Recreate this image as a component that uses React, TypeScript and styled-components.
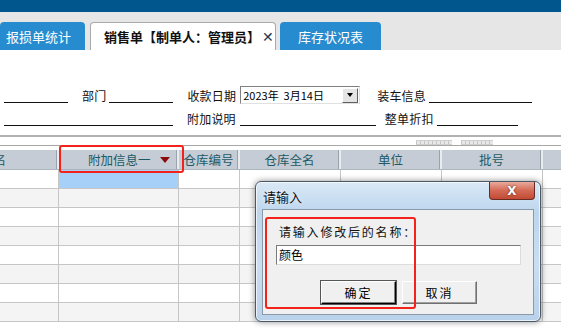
import React from 'react';
import styled, { createGlobalStyle } from 'styled-components';

const GlobalStyle = createGlobalStyle`
  html, body {
    margin: 0;
    padding: 0;
    width: 561px;
    height: 328px;
    overflow: hidden;
    background: #fff;
    font-family: "Noto Sans CJK SC", "Noto Sans", sans-serif;
  }
`;

const Page = styled.div`
  position: relative;
  width: 561px;
  height: 328px;
  overflow: hidden;
  display: flex;
  flex-direction: column;
`;

const TopBar = styled.div`
  height: 12px;
  background: #02568e;
  flex-shrink: 0;
`;

const TabStrip = styled.div`
  height: 38px;
  background: #e6e6e6;
  display: flex;
  align-items: flex-end;
  flex-shrink: 0;
`;

const Tab = styled.div<{ $w: number; $ml?: number; $pl?: number; $active?: boolean }>`
  width: ${(p) => p.$w}px;
  margin-left: ${(p) => p.$ml ?? 0}px;
  padding-left: ${(p) => p.$pl ?? 0}px;
  height: 28px;
  box-sizing: border-box;
  display: flex;
  align-items: center;
  justify-content: ${(p) => (p.$pl ? 'flex-start' : 'center')};
  border-radius: 4px 4px 0 0;
  font-size: 13px;
  white-space: nowrap;
  background: ${(p) => (p.$active ? '#fff' : '#268ccf')};
  color: ${(p) => (p.$active ? '#111' : '#fff')};
  border: ${(p) => (p.$active ? '1px solid #a9a9a9' : 'none')};
  border-bottom: none;
  font-weight: ${(p) => (p.$active ? 700 : 400)};
`;

const TabClose = styled.span`
  margin-left: 2px;
  font-size: 14px;
  font-weight: 700;
  color: #1e3a52;
  font-family: "DejaVu Sans", sans-serif;
`;

const Form = styled.div`
  height: 85px;
  box-sizing: border-box;
  padding-top: 36px;
  display: flex;
  flex-direction: column;
  gap: 5px;
  flex-shrink: 0;
`;

const FormRow = styled.div`
  display: flex;
  align-items: flex-end;
  height: 18px;
  padding-left: 4px;
`;

const Label = styled.span<{ $ml: number }>`
  margin-left: ${(p) => p.$ml}px;
  font-size: 12px;
  line-height: 16px;
  color: #111;
  letter-spacing: 0.2px;
  white-space: nowrap;
`;

const Blank = styled.span<{ $w: number; $ml?: number }>`
  width: ${(p) => p.$w}px;
  margin-left: ${(p) => p.$ml ?? 0}px;
  height: 0;
  border-bottom: 1px solid #111;
  margin-bottom: 1px;
`;

const DateBox = styled.div<{ $ml: number }>`
  margin-left: ${(p) => p.$ml}px;
  width: 120px;
  height: 18px;
  box-sizing: border-box;
  border: 1px solid;
  border-color: #808080 #e0e0e0 #e0e0e0 #808080;
  background: #fff;
  display: flex;
  align-items: center;
  justify-content: space-between;
  padding-left: 2px;
  font-size: 11px;
  color: #000;
  white-space: pre;
`;

const DropBtn = styled.div`
  width: 16px;
  height: 15px;
  margin-right: 1px;
  box-sizing: border-box;
  border: 1px solid;
  border-color: #fff #606060 #606060 #fff;
  background: #e4e4e4;
  display: flex;
  align-items: center;
  justify-content: center;
  &::after {
    content: '';
    border-left: 3.5px solid transparent;
    border-right: 3.5px solid transparent;
    border-top: 4px solid #000;
  }
`;

const Splitter = styled.div`
  height: 15px;
  flex-shrink: 0;
  box-sizing: border-box;
  border-top: 2px solid #b2b2b2;
  display: flex;
  flex-direction: column;
`;

const Grips = styled.div`
  height: 8px;
  display: flex;
  gap: 9px;
  padding-left: 416px;
  padding-top: 2px;
  box-sizing: border-box;
  align-items: center;
`;

const Grip = styled.span<{ $w: number }>`
  width: ${(p) => p.$w}px;
  height: 3px;
  background: repeating-linear-gradient(90deg, #c4c4c4 0 1px, #e8e8e8 1px 4px);
  border-top: 1px solid #cfcfcf;
  border-bottom: 1px solid #cfcfcf;
`;

const SplitLine = styled.div`
  border-top: 1px solid #a8a8a8;
`;

const Grid = styled.div`
  display: flex;
  flex-direction: column;
  margin-left: -41px;
`;

const Row = styled.div<{ $header?: boolean; $alt?: boolean }>`
  display: flex;
  height: ${(p) => (p.$header ? 20 : 19)}px;
  box-sizing: border-box;
  background: ${(p) => (p.$header ? '#c5ccd5' : p.$alt ? '#f4f4f4' : '#fff')};
  border-bottom: 1px solid ${(p) => (p.$header ? '#aeb5bd' : '#c6c6c6')};
`;

const Cell = styled.div<{ $w: number; $header?: boolean; $sel?: boolean; $pl?: number }>`
  position: relative;
  width: ${(p) => p.$w}px;
  flex-shrink: 0;
  box-sizing: border-box;
  padding-left: ${(p) => p.$pl ?? 0}px;
  border-right: ${(p) => (p.$header ? '2px solid #e9ecef' : '1px solid #c6c6c6')};
  box-shadow: ${(p) => (p.$header ? 'inset -1px 0 0 #9aa2ab' : 'none')};
  background: ${(p) => (p.$sel ? '#a6d0f8' : 'transparent')};
  display: flex;
  align-items: center;
  justify-content: ${(p) => (p.$pl !== undefined ? 'flex-start' : 'center')};
  font-size: 12.5px;
  color: #1c5a66;
  white-space: nowrap;
  overflow: hidden;
`;

const SortArrow = styled.span`
  position: absolute;
  right: 7px;
  top: 7px;
  border-left: 5px solid transparent;
  border-right: 5px solid transparent;
  border-top: 6px solid #8b0a0a;
`;

const Callout = styled.div`
  position: absolute;
  border: 2.5px solid #f3231b;
  border-radius: 3px;
  pointer-events: none;
`;

const Dialog = styled.div`
  position: absolute;
  left: 255px;
  top: 181px;
  width: 286px;
  height: 141px;
  box-sizing: border-box;
  border: 1px solid #4a5866;
  border-radius: 6px;
  background: linear-gradient(180deg, #d9e8f6 0%, #bdd6ee 22%, #c9def2 60%, #b9d1ea 100%);
  box-shadow: 0 0 6px rgba(0, 0, 0, 0.45), inset 0 0 0 1px rgba(255, 255, 255, 0.7);
  display: flex;
  flex-direction: column;
  padding: 0 6px 6px 6px;
`;

const TitleBar = styled.div`
  height: 27px;
  display: flex;
  align-items: flex-start;
  justify-content: space-between;
`;

const Title = styled.span`
  margin-top: 5px;
  margin-left: 1px;
  font-size: 13px;
  color: #111;
  text-shadow: 0 0 4px #fff;
`;

const CloseBtn = styled.div`
  width: 46px;
  height: 18px;
  margin-right: -1px;
  box-sizing: border-box;
  border: 1px solid #6b2a22;
  border-top: none;
  border-radius: 0 0 4px 4px;
  background: linear-gradient(180deg, #e9a99b 0%, #d46a55 50%, #c24a34 100%);
  display: flex;
  align-items: center;
  justify-content: center;
  color: #fff;
  font-weight: 700;
  font-size: 12px;
  font-family: "DejaVu Sans", sans-serif;
  text-shadow: 0 0 2px #4a1a12;
`;

const Panel = styled.div`
  flex: 1;
  background: #f0f0f0;
  border: 1px solid #8a9aaa;
  box-sizing: border-box;
  position: relative;
  padding: 14px 0 0 13px;
  display: flex;
  flex-direction: column;
`;

const Prompt = styled.div`
  font-size: 12px;
  letter-spacing: 1.8px;
  color: #111;
  margin-left: 3px;
  line-height: 16px;
`;

const NameInput = styled.div`
  margin-top: 5px;
  width: 245px;
  height: 20px;
  box-sizing: border-box;
  border: 1px solid;
  border-color: #7a7a7a #dcdcdc #dcdcdc #7a7a7a;
  background: #fff;
  font-size: 12px;
  line-height: 18px;
  padding-left: 2px;
  color: #000;
`;

const Buttons = styled.div`
  display: flex;
  gap: 6px;
  margin-top: 16px;
  margin-left: 45px;
`;

const Button = styled.div<{ $focus?: boolean }>`
  width: 75px;
  height: 23px;
  box-sizing: border-box;
  border: 1px solid;
  border-color: ${(p) => (p.$focus ? '#fff #000 #000 #fff' : '#fff #707070 #707070 #fff')};
  box-shadow: ${(p) => (p.$focus ? 'inset -1px -1px 0 #808080, 0 0 0 1px #555' : 'inset -1px -1px 0 #a0a0a0')};
  background: #f0f0f0;
  display: flex;
  align-items: center;
  justify-content: center;
  font-size: 12px;
  letter-spacing: 2px;
  color: #000;
`;

const columns = [
  { w: 100, label: '品名', pl: 22 },
  { w: 120, label: '附加信息一', pl: 29 },
  { w: 61, label: '仓库编号' },
  { w: 101, label: '仓库全名' },
  { w: 101, label: '单位' },
  { w: 101, label: '批号' },
  { w: 60, label: '' },
];

export default function App() {
  const rows = Array.from({ length: 8 });
  return (
    <Page>
      <GlobalStyle />
      <TopBar />
      <TabStrip>
        <Tab $w={85} $pl={6}>报损单统计</Tab>
        <Tab $w={186} $ml={5} $pl={13} $active>
          销售单【制单人：管理员】<TabClose>✕</TabClose>
        </Tab>
        <Tab $w={101} $ml={4}>库存状况表</Tab>
      </TabStrip>

      <Form>
        <FormRow>
          <Blank $w={64} />
          <Label $ml={14}>部门</Label>
          <Blank $w={64} $ml={3} />
          <Label $ml={14}>收款日期</Label>
          <DateBox $ml={4}>
            {'2023年  3月14日'}
            <DropBtn />
          </DateBox>
          <Label $ml={17}>装车信息</Label>
          <Blank $w={103} $ml={3} />
        </FormRow>
        <FormRow>
          <Blank $w={169} />
          <Label $ml={14}>附加说明</Label>
          <Blank $w={136} $ml={4} />
          <Label $ml={9}>整单折扣</Label>
          <Blank $w={81} $ml={3} />
        </FormRow>
      </Form>

      <Splitter>
        <Grips>
          <Grip $w={36} />
          <Grip $w={32} />
        </Grips>
        <SplitLine />
      </Splitter>

      <Grid>
        <Row $header>
          {columns.map((c, i) => (
            <Cell key={i} $w={c.w} $pl={c.pl} $header>
              {c.label}
              {i === 1 && <SortArrow />}
            </Cell>
          ))}
        </Row>
        {rows.map((_, r) => (
          <Row key={r} $alt={r % 2 === 1}>
            {columns.map((c, i) => (
              <Cell key={i} $w={c.w} $sel={r === 0 && i === 1} />
            ))}
          </Row>
        ))}
      </Grid>

      <Callout style={{ left: 59, top: 145, width: 121, height: 24 }} />

      <Dialog>
        <TitleBar>
          <Title>请输入</Title>
          <CloseBtn>X</CloseBtn>
        </TitleBar>
        <Panel>
          <Prompt>请输入修改后的名称：</Prompt>
          <NameInput>颜色</NameInput>
          <Buttons>
            <Button $focus>确定</Button>
            <Button>取消</Button>
          </Buttons>
        </Panel>
      </Dialog>
      <Callout style={{ left: 265, top: 217, width: 147, height: 88 }} />
    </Page>
  );
}
